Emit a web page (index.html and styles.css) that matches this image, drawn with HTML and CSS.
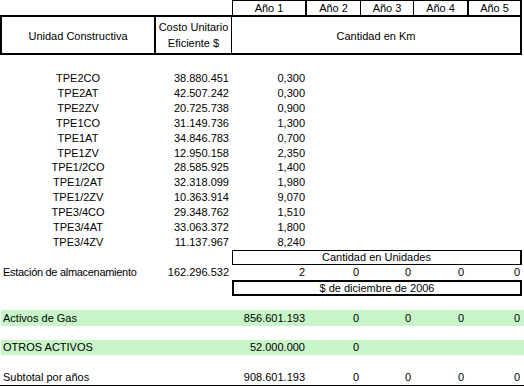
FILE: index.html
```html
<!DOCTYPE html>
<html lang="es">
<head>
<meta charset="utf-8">
<title>Unidad Constructiva</title>
<link rel="stylesheet" href="styles.css">
</head>
<body>
<div class="sheet">
  <div class="row r-years">
    <div class="c"></div><div class="c"></div>
    <div class="c yr y1">Año 1</div>
    <div class="c yr y2">Año 2</div>
    <div class="c yr y3">Año 3</div>
    <div class="c yr y4">Año 4</div>
    <div class="c yr y5">Año 5</div>
  </div>
  <div class="row r-head">
    <div class="c h-a">Unidad Constructiva</div>
    <div class="c h-b">Costo Unitario<br>Eficiente $</div>
    <div class="c h-c span5">Cantidad en Km</div>
  </div>
  <div class="row r-gap16"></div>

  <div class="row r-data"><div class="c name">TPE2CO</div><div class="c num nb">38.880.451</div><div class="c num n1">0,300</div></div>
  <div class="row r-data"><div class="c name">TPE2AT</div><div class="c num nb">42.507.242</div><div class="c num n1">0,300</div></div>
  <div class="row r-data"><div class="c name">TPE2ZV</div><div class="c num nb">20.725.738</div><div class="c num n1">0,900</div></div>
  <div class="row r-data"><div class="c name">TPE1CO</div><div class="c num nb">31.149.736</div><div class="c num n1">1,300</div></div>
  <div class="row r-data"><div class="c name">TPE1AT</div><div class="c num nb">34.846.783</div><div class="c num n1">0,700</div></div>
  <div class="row r-data"><div class="c name">TPE1ZV</div><div class="c num nb">12.950.158</div><div class="c num n1">2,350</div></div>
  <div class="row r-data"><div class="c name">TPE1/2CO</div><div class="c num nb">28.585.925</div><div class="c num n1">1,400</div></div>
  <div class="row r-data"><div class="c name">TPE1/2AT</div><div class="c num nb">32.318.099</div><div class="c num n1">1,980</div></div>
  <div class="row r-data"><div class="c name">TPE1/2ZV</div><div class="c num nb">10.363.914</div><div class="c num n1">9,070</div></div>
  <div class="row r-data"><div class="c name">TPE3/4CO</div><div class="c num nb">29.348.762</div><div class="c num n1">1,510</div></div>
  <div class="row r-data"><div class="c name">TPE3/4AT</div><div class="c num nb">33.063.372</div><div class="c num n1">1,800</div></div>
  <div class="row r-data"><div class="c name">TPE3/4ZV</div><div class="c num nb">11.137.967</div><div class="c num n1">8,240</div></div>
  <div class="row r-gap1"></div>

  <div class="row r-15">
    <div class="c"></div><div class="c"></div>
    <div class="c box box-thin span5">Cantidad en Unidades</div>
  </div>
  <div class="row r-15">
    <div class="c label tight">Estación de almacenamiento</div>
    <div class="c num nb">162.296.532</div>
    <div class="c num n1">2</div>
    <div class="c num n2">0</div>
    <div class="c num n3">0</div>
    <div class="c num n4">0</div>
    <div class="c num n5">0</div>
  </div>
  <div class="row r-15">
    <div class="c"></div><div class="c"></div>
    <div class="c box box-thick span5">$ de diciembre de 2006</div>
  </div>
  <div class="row r-15"></div>

  <div class="row r-16 green">
    <div class="c label">Activos de Gas</div>
    <div class="c"></div>
    <div class="c num n1">856.601.193</div>
    <div class="c num n2">0</div>
    <div class="c num n3">0</div>
    <div class="c num n4">0</div>
    <div class="c num n5">0</div>
  </div>
  <div class="row r-14"></div>
  <div class="row r-15 green">
    <div class="c label">OTROS ACTIVOS</div>
    <div class="c"></div>
    <div class="c num n1">52.000.000</div>
    <div class="c num n2">0</div>
  </div>
  <div class="row r-15"></div>
  <div class="row r-15 total">
    <div class="c label">Subtotal por años</div>
    <div class="c"></div>
    <div class="c num n1">908.601.193</div>
    <div class="c num n2">0</div>
    <div class="c num n3">0</div>
    <div class="c num n4">0</div>
    <div class="c num n5">0</div>
  </div>
</div>
</body>
</html>
```

FILE: styles.css
```css
html, body {
  margin: 0;
  padding: 0;
  background: #ffffff;
}

body {
  font-family: "Liberation Sans", Arial, sans-serif;
  font-size: 11px;
  color: #000000;
}

.sheet {
  width: 524px;
  height: 386px;
  overflow: hidden;
}

.row {
  display: grid;
  grid-template-columns: 156px 76px 75px 54px 53px 55px 53px 2px;
  box-sizing: border-box;
}

.c {
  box-sizing: border-box;
  display: flex;
  align-items: center;
  white-space: nowrap;
  min-width: 0;
}

.span5 {
  grid-column: 3 / 8;
  justify-content: center;
}

/* year header */
.r-years { height: 15px; }
.yr {
  justify-content: center;
  border-top: 1px solid #000;
  border-right: 1px solid #000;
}
.y1 { border-left: 1px solid #000; border-right-width: 2px; }
.y4 { border-right-width: 2px; }
.y5 { border-right-width: 2px; }

/* main header */
.r-head { height: 40px; }
.h-a {
  justify-content: center;
  border: 2px solid #000;
  padding-top: 1px;
}
.h-b {
  flex-direction: column;
  justify-content: center;
  text-align: center;
  line-height: 16px;
  border-top: 2px solid #000;
  border-bottom: 2px solid #000;
  border-right: 1px solid #000;
}
.h-c {
  border-top: 2px solid #000;
  border-bottom: 2px solid #000;
  border-right: 2px solid #000;
  padding-top: 1px;
}

.r-gap16 { height: 16px; }
.r-gap1 { height: 1px; }
.r-data { height: 14.83px; }
.r-14 { height: 14px; }
.r-15 { height: 15px; }
.r-16 { height: 16px; }

.name { justify-content: center; }
.label { padding-left: 3px; }
.tight { letter-spacing: -0.3px; }

.num { justify-content: flex-end; }
.nb { padding-right: 3px; }
.n1 { padding-right: 2px; }
.n2 { padding-right: 2px; }
.n3 { padding-right: 3px; }
.n4 { padding-right: 5px; }
.n5 { padding-right: 2px; }

.box {
  border: 1px solid #000;
}
.box-thin { border-right-width: 2px; }
.box-thick { border-width: 2px; }

.green {
  background: #c8f6c8;
  box-shadow: inset 1px 0 0 #ffffff;
}

.total {
  height: 16px;
  border-bottom: 1px solid #000;
}
```
